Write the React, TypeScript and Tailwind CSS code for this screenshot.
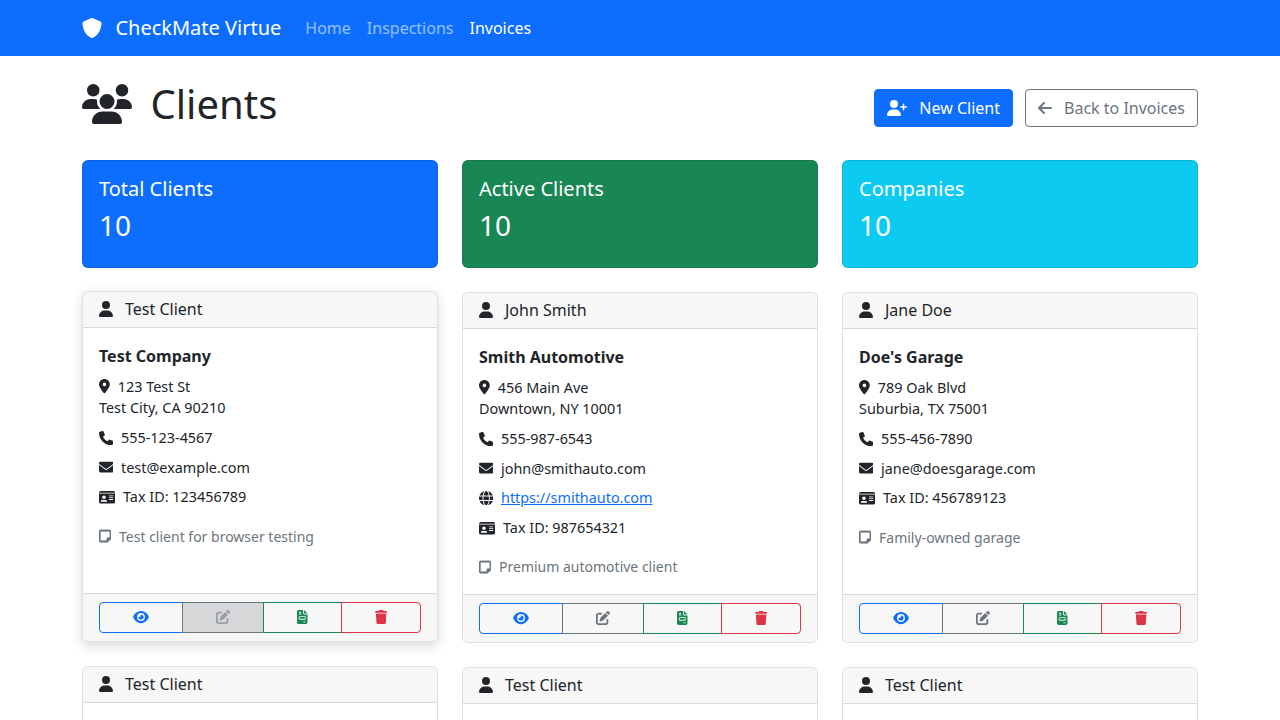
import type { ReactNode } from 'react';
import {
  FaArrowLeft,
  FaEnvelope,
  FaEye,
  FaFileInvoice,
  FaGlobe,
  FaIdCard,
  FaLocationDot,
  FaPenToSquare,
  FaPhone,
  FaRegNoteSticky,
  FaShield,
  FaTrash,
  FaUser,
  FaUserPlus,
  FaUsers,
} from 'react-icons/fa6';

interface Client {
  name: string;
  company: string;
  street: string;
  city: string;
  phone: string;
  email: string;
  website?: string;
  taxId: string;
  note: string;
}

const testClient: Client = {
  name: 'Test Client',
  company: 'Test Company',
  street: '123 Test St',
  city: 'Test City, CA 90210',
  phone: '555-123-4567',
  email: 'test@example.com',
  taxId: '123456789',
  note: 'Test client for browser testing',
};

const clients: Client[] = [
  testClient,
  {
    name: 'John Smith',
    company: 'Smith Automotive',
    street: '456 Main Ave',
    city: 'Downtown, NY 10001',
    phone: '555-987-6543',
    email: 'john@smithauto.com',
    website: 'https://smithauto.com',
    taxId: '987654321',
    note: 'Premium automotive client',
  },
  {
    name: 'Jane Doe',
    company: "Doe's Garage",
    street: '789 Oak Blvd',
    city: 'Suburbia, TX 75001',
    phone: '555-456-7890',
    email: 'jane@doesgarage.com',
    taxId: '456789123',
    note: 'Family-owned garage',
  },
  testClient,
  testClient,
  testClient,
];

function StatCard({ title, value, color }: { title: string; value: string; color: string }) {
  return (
    <div className={`rounded-[6px] border border-black/10 p-4 text-white ${color}`}>
      <h5 className="mb-2 text-[20px] leading-[24px] font-normal">{title}</h5>
      <h2 className="mb-2 text-[28px] leading-[33.6px] font-normal">{value}</h2>
    </div>
  );
}

function InfoRow({ icon, children }: { icon: ReactNode; children: ReactNode }) {
  return (
    <div className="mb-2 flex h-[21.6px] items-center text-[14.4px] leading-[21.6px]">
      {icon}
      {children}
    </div>
  );
}

function ClientCard({ client, hovered, lifted }: { client: Client; hovered?: boolean; lifted?: boolean }) {
  return (
    <div
      className={`flex flex-col overflow-hidden rounded-[6px] border border-black/[0.125] bg-white text-[#212529] ${
        hovered ? 'shadow-[0_4px_12px_rgba(0,0,0,0.15)]' : ''
      } ${lifted ? '-translate-y-px' : ''}`}
    >
      <div className="flex h-[36px] items-center border-b border-black/[0.125] bg-[#f7f7f7] px-4 text-[16px]">
        <FaUser className="mr-[12px] h-[16px] w-[14px]" />
        {client.name}
      </div>
      <div className="flex-1 px-4 pt-4 pb-[16.4px]">
        <h6 className="mb-2 text-[16px] leading-[24px] font-bold">{client.company}</h6>
        <div className="mb-[8.4px] text-[14.4px] leading-[21.6px]">
          <div className="flex items-center">
            <FaLocationDot className="mr-[8px] h-[14.4px] w-[10.8px]" />
            {client.street}
          </div>
          <div>{client.city}</div>
        </div>
        <InfoRow icon={<FaPhone className="mr-[7.6px] h-[14.4px] w-[14.4px]" />}>{client.phone}</InfoRow>
        <InfoRow icon={<FaEnvelope className="mr-[7.6px] h-[14.4px] w-[14.4px]" />}>{client.email}</InfoRow>
        {client.website && (
          <InfoRow icon={<FaGlobe className="mr-[7.6px] h-[14.4px] w-[14.4px]" />}>
            <a href="#" className="text-[#0d6efd] underline">
              {client.website}
            </a>
          </InfoRow>
        )}
        <InfoRow icon={<FaIdCard className="mr-[7.8px] h-[14.4px] w-[16.2px]" />}>Tax ID: {client.taxId}</InfoRow>
        <div className="mt-[17.6px] flex items-center text-[14px] leading-[21px] text-[#6c757d]">
          <FaRegNoteSticky className="mr-[7.8px] h-[14px] w-[12.25px] stroke-[#6c757d] stroke-[24px]" />
          {client.note}
        </div>
      </div>
      <div className="border-t border-black/[0.125] bg-[#f7f7f7] px-4 py-2">
        <div className="flex h-[31px]">
          <button className="flex w-[84px] items-center justify-center rounded-l-[4px] border border-[#0d6efd] text-[#0d6efd]">
            <FaEye className="h-[14px] w-[16px]" />
          </button>
          <button
            className={`-ml-px flex w-[82px] items-center justify-center border border-[#6c757d] ${
              hovered ? 'bg-[#d5d7d9] text-[#9a9ea3]' : 'text-[#6c757d]'
            }`}
          >
            <FaPenToSquare className="h-[14px] w-[14px]" />
          </button>
          <button className="-ml-px flex w-[79px] items-center justify-center border border-[#198754] text-[#198754]">
            <FaFileInvoice className="h-[14px] w-[10.5px]" />
          </button>
          <button className="-ml-px flex w-[80px] items-center justify-center rounded-r-[4px] border border-[#dc3545] text-[#dc3545]">
            <FaTrash className="h-[14px] w-[12.25px]" />
          </button>
        </div>
      </div>
    </div>
  );
}

export default function App() {
  return (
    <div className="h-screen overflow-hidden bg-white font-['Noto_Sans',sans-serif] text-[#212529]">
      <nav className="h-[56px] bg-[#0d6efd]">
        <div className="mx-auto flex h-full w-[1140px] items-center px-3">
          <a href="#" className="mr-4 flex items-center text-[20px] text-white">
            <FaShield className="mr-[13.4px] h-[20px] w-[20px]" />
            CheckMate Virtue
          </a>
          <a href="#" className="px-2 text-[16px] text-white/55">
            Home
          </a>
          <a href="#" className="px-2 text-[16px] text-white/55">
            Inspections
          </a>
          <a href="#" className="px-2 text-[16px] text-white">
            Invoices
          </a>
        </div>
      </nav>

      <main className="mx-auto w-[1140px] px-3 pt-6">
        <div className="mb-8 flex items-start justify-between">
          <h1 className="flex items-center text-[40px] leading-[48px] font-normal">
            <FaUsers className="mr-[18.5px] h-[40px] w-[50px]" />
            Clients
          </h1>
          <div className="mt-[9px] flex gap-3">
            <button className="flex h-[38px] items-center rounded-[4px] border border-[#0d6efd] bg-[#0d6efd] px-3 text-[16px] text-white">
              <FaUserPlus className="mr-[12px] h-[16px] w-[20px]" />
              New Client
            </button>
            <button className="flex h-[38px] items-center rounded-[4px] border border-[#6c757d] bg-white px-3 text-[16px] text-[#6c757d]">
              <FaArrowLeft className="mr-[12px] h-[16px] w-[14px]" />
              Back to Invoices
            </button>
          </div>
        </div>

        <div className="mb-6 grid grid-cols-3 gap-6">
          <StatCard title="Total Clients" value="10" color="bg-[#0d6efd]" />
          <StatCard title="Active Clients" value="10" color="bg-[#198754]" />
          <StatCard title="Companies" value="10" color="bg-[#0dcaf0]" />
        </div>

        <div className="grid grid-cols-3 gap-6">
          {clients.map((client, idx) => (
            <ClientCard key={idx} client={client} hovered={idx === 0} lifted={idx === 0 || idx === 3} />
          ))}
        </div>
      </main>
    </div>
  );
}
